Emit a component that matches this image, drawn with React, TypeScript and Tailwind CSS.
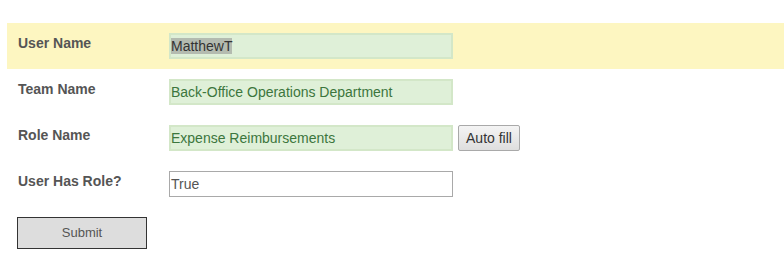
import React from "react";

const font = { fontFamily: '"Liberation Sans", Arial, sans-serif' };

function Row({
  label,
  highlight,
  children,
}: {
  label: string;
  highlight?: boolean;
  children: React.ReactNode;
}) {
  return (
    <div
      className={`flex h-[46px] items-start pl-[11px] ${highlight ? "bg-[#fdf6c1]" : ""}`}
    >
      <div className="w-[151px] shrink-0 pt-[12px] text-[14px] font-bold leading-[16px] text-[#555555]">
        {label}
      </div>
      <div className="flex items-center gap-[5px] pt-[10px]">{children}</div>
    </div>
  );
}

export default function App() {
  return (
    <div className="h-[273px] w-[784px] bg-white" style={font}>
      <div className="pl-[7px] pt-[23px]">
        <Row label="User Name" highlight>
          <div className="flex h-[26px] w-[284px] items-center border-2 border-[#d3e7c8] bg-[#dff0d8] text-[14px] text-[#333333]">
            <span className="bg-[#b4bbb0] leading-[16px]">MatthewT</span>
          </div>
        </Row>
        <Row label="Team Name">
          <div className="flex h-[26px] w-[284px] items-center border-2 border-[#d3e7c8] bg-[#dff0d8] text-[14px] text-[#3c763d]">
            Back-Office Operations Department
          </div>
        </Row>
        <Row label="Role Name">
          <div className="flex h-[26px] w-[284px] items-center border-2 border-[#d3e7c8] bg-[#dff0d8] text-[14px] text-[#3c763d]">
            Expense Reimbursements
          </div>
          <button className="flex h-[26px] w-[62px] items-center justify-center rounded-[2px] border border-[#a9a9a9] bg-gradient-to-b from-[#f4f4f4] to-[#dedede] text-[14px] text-[#333333]">
            Auto fill
          </button>
        </Row>
        <Row label="User Has Role?">
          <div className="flex h-[26px] w-[284px] items-center border border-[#a9a9a9] bg-white pl-px text-[14px] text-[#555555]">
            True
          </div>
        </Row>
        <div className="pl-[10px] pt-[10px]">
          <button className="flex h-[32px] w-[130px] items-center justify-center border border-[#333333] bg-[#dddddd] text-[13px] text-[#555555]">
            Submit
          </button>
        </div>
      </div>
    </div>
  );
}
